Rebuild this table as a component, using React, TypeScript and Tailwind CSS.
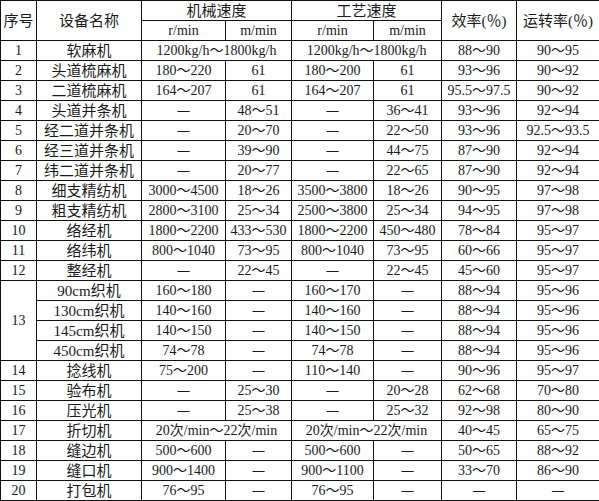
import * as React from 'react';

// ---- Data ----

interface Row {
  no?: string;
  span?: number;
  name: string;
  mech: string[]; // one entry = merged r/min + m/min
  proc: string[];
  eff: string;
  run: string;
}

const D = '—';

const rows: Row[] = [
  { no: '1', name: '软麻机', mech: ['1200kg/h～1800kg/h'], proc: ['1200kg/h～1800kg/h'], eff: '88～90', run: '90～95' },
  { no: '2', name: '头道梳麻机', mech: ['180～220', '61'], proc: ['180～200', '61'], eff: '93～96', run: '90～92' },
  { no: '3', name: '二道梳麻机', mech: ['164～207', '61'], proc: ['164～207', '61'], eff: '95.5～97.5', run: '90～92' },
  { no: '4', name: '头道并条机', mech: [D, '48～51'], proc: [D, '36～41'], eff: '93～96', run: '92～94' },
  { no: '5', name: '经二道并条机', mech: [D, '20～70'], proc: [D, '22～50'], eff: '93～96', run: '92.5～93.5' },
  { no: '6', name: '经三道并条机', mech: [D, '39～90'], proc: [D, '44～75'], eff: '87～90', run: '92～94' },
  { no: '7', name: '纬二道并条机', mech: [D, '20～77'], proc: [D, '22～65'], eff: '87～90', run: '92～94' },
  { no: '8', name: '细支精纺机', mech: ['3000～4500', '18～26'], proc: ['3500～3800', '18～26'], eff: '90～95', run: '97～98' },
  { no: '9', name: '粗支精纺机', mech: ['2800～3100', '25～34'], proc: ['2500～3800', '25～34'], eff: '94～95', run: '97～98' },
  { no: '10', name: '络经机', mech: ['1800～2200', '433～530'], proc: ['1800～2200', '450～480'], eff: '78～84', run: '95～97' },
  { no: '11', name: '络纬机', mech: ['800～1040', '73～95'], proc: ['800～1040', '73～95'], eff: '60～66', run: '95～97' },
  { no: '12', name: '整经机', mech: [D, '22～45'], proc: [D, '22～45'], eff: '45～60', run: '95～97' },
  { no: '13', span: 4, name: '90cm织机', mech: ['160～180', D], proc: ['160～170', D], eff: '88～94', run: '95～96' },
  { name: '130cm织机', mech: ['140～160', D], proc: ['140～160', D], eff: '88～94', run: '95～96' },
  { name: '145cm织机', mech: ['140～150', D], proc: ['140～150', D], eff: '88～94', run: '95～96' },
  { name: '450cm织机', mech: ['74～78', D], proc: ['74～78', D], eff: '88～94', run: '95～96' },
  { no: '14', name: '捻线机', mech: ['75～200', D], proc: ['110～140', D], eff: '90～96', run: '95～97' },
  { no: '15', name: '验布机', mech: [D, '25～30'], proc: [D, '20～28'], eff: '62～68', run: '70～80' },
  { no: '16', name: '压光机', mech: [D, '25～38'], proc: [D, '25～32'], eff: '92～98', run: '80～90' },
  { no: '17', name: '折切机', mech: ['20次/min～22次/min'], proc: ['20次/min～22次/min'], eff: '40～45', run: '65～75' },
  { no: '18', name: '缝边机', mech: ['500～600', D], proc: ['500～600', D], eff: '50～65', run: '88～92' },
  { no: '19', name: '缝口机', mech: ['900～1400', D], proc: ['900～1100', D], eff: '33～70', run: '86～90' },
  { no: '20', name: '打包机', mech: ['76～95', D], proc: ['76～95', D], eff: D, run: D },
];

const cell = 'border border-[#111] p-0 text-center align-middle whitespace-nowrap leading-none';

// short, thick dash as in the source table
function Val({ v }: { v: string }) {
  if (v === D) {
    return <span className="relative -top-px text-[12px] font-bold">—</span>;
  }
  return <>{v}</>;
}

function Speed({ vals }: { vals: string[] }) {
  if (vals.length === 1) {
    return <td colSpan={2} className={cell}>{vals[0]}</td>;
  }
  return (
    <>
      <td className={cell}><Val v={vals[0]} /></td>
      <td className={cell}><Val v={vals[1]} /></td>
    </>
  );
}

// ---- Page ----

export default function App() {
  return (
    <div className="bg-white">
      <table
        className="w-[599px] table-fixed border-collapse text-[14px] text-[#1a1a1a]"
        style={{ fontFamily: '"Liberation Serif", "Noto Sans CJK SC", serif' }}
      >
        <colgroup>
          <col className="w-[36px]" />
          <col className="w-[105px]" />
          <col className="w-[84px]" />
          <col className="w-[66px]" />
          <col className="w-[82px]" />
          <col className="w-[68px]" />
          <col className="w-[75px]" />
          <col className="w-[83px]" />
        </colgroup>
        <thead>
          <tr className="h-5 text-[15px]">
            <th rowSpan={2} className={`${cell} pt-[2px] font-normal`}>序号</th>
            <th rowSpan={2} className={`${cell} pt-[2px] font-normal`}>设备名称</th>
            <th colSpan={2} className={`${cell} pt-px font-normal`}>机械速度</th>
            <th colSpan={2} className={`${cell} pt-px font-normal`}>工艺速度</th>
            <th rowSpan={2} className={`${cell} pt-[2px] font-normal`}>效率(％)</th>
            <th rowSpan={2} className={`${cell} pt-[2px] font-normal`}>运转率(％)</th>
          </tr>
          <tr className="h-5 text-[14px]">
            <th className={`${cell} font-normal`}>r/min</th>
            <th className={`${cell} font-normal`}>m/min</th>
            <th className={`${cell} font-normal`}>r/min</th>
            <th className={`${cell} font-normal`}>m/min</th>
          </tr>
        </thead>
        <tbody>
          {rows.map((r, i) => (
            <tr key={i} className="h-5">
              {r.no && (
                <td rowSpan={r.span} className={cell}>{r.no}</td>
              )}
              <td className={`${cell} pt-px text-[15px]`}>{r.name}</td>
              <Speed vals={r.mech} />
              <Speed vals={r.proc} />
              <td className={cell}><Val v={r.eff} /></td>
              <td className={cell}><Val v={r.run} /></td>
            </tr>
          ))}
        </tbody>
      </table>
    </div>
  );
}
